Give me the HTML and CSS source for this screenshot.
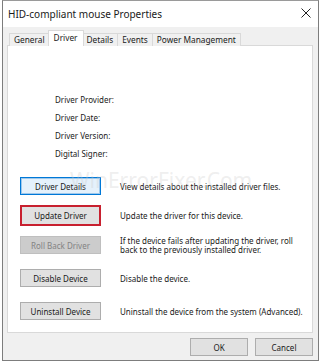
FILE: index.html
```html
<!DOCTYPE html>
<html lang="en">
<head>
  <meta charset="UTF-8" />
  <title>HID-compliant mouse Properties</title>
  <link rel="stylesheet" href="styles.css">
</head>
<body>

  <div class="window">
    <div class="titlebar">
      <span class="title">HID-compliant mouse Properties</span>
      <svg class="close" width="10" height="10" viewBox="0 0 10 10">
        <path d="M0.5 0.5 L9.5 9.5 M9.5 0.5 L0.5 9.5" stroke="#222" stroke-width="1" fill="none"/>
      </svg>
    </div>

    <div class="body">
      <div class="tabs">
        <div class="tab">General</div>
        <div class="tab active">Driver</div>
        <div class="tab">Details</div>
        <div class="tab">Events</div>
        <div class="tab">Power Management</div>
      </div>

      <div class="panel">
        <div class="info">
          <div>Driver Provider:</div>
          <div>Driver Date:</div>
          <div>Driver Version:</div>
          <div>Digital Signer:</div>
        </div>

        <div class="actions">
          <div class="row">
            <button class="btn focused">Driver Details</button>
            <p>View details about the installed driver files.</p>
          </div>
          <div class="row">
            <button class="btn marked">Update Driver</button>
            <p>Update the driver for this device.</p>
          </div>
          <div class="row">
            <button class="btn" disabled>Roll Back Driver</button>
            <p>If the device fails after updating the driver, roll back to the previously installed driver.</p>
          </div>
          <div class="row spaced">
            <button class="btn">Disable Device</button>
            <p>Disable the device.</p>
          </div>
          <div class="row spaced">
            <button class="btn">Uninstall Device</button>
            <p>Uninstall the device from the system (Advanced).</p>
          </div>
        </div>

        <div class="watermark">WinErrorFixer.Com</div>
      </div>

      <div class="footer">
        <button class="btn wide">OK</button>
        <button class="btn wide">Cancel</button>
      </div>
    </div>
  </div>

</body>
</html>
```

FILE: styles.css
```css
body {
  margin: 0;
  background: #fff;
  font-family: 'Noto Sans', sans-serif;
  font-size: 8px;
  color: #1a1a1a;
}

.window {
  width: 315px;
  height: 359px;
  margin-left: 2px;
  border: 1px solid #7d7d7d;
  border-top-color: #9a9a9a;
  background: #f0f0f0;
  display: flex;
  flex-direction: column;
}

.titlebar {
  height: 25px;
  background: #fff;
  display: flex;
  align-items: center;
  justify-content: space-between;
  padding: 0 7px 1px 5px;
}

.title {
  font-size: 10px;
}

.close {
  margin-top: -1px;
}

.body {
  flex: 1;
  padding: 6px 5px 0 4px;
  display: flex;
  flex-direction: column;
}

.tabs {
  display: flex;
  align-items: flex-end;
  padding-left: 2px;
  height: 13px;
  position: relative;
  z-index: 1;
  font-size: 8.3px;
}

.tab {
  height: 12px;
  padding: 0 4px;
  border: 1px solid #d9d9d9;
  border-bottom: none;
  margin-right: -1px;
  line-height: 12px;
  background: #f0f0f0;
}

.tab.active {
  height: 15px;
  background: #fff;
  margin-left: -1px;
  margin-right: -2px;
  padding: 0 5px;
  line-height: 13px;
  position: relative;
  z-index: 2;
}

.panel {
  position: relative;
  height: 286px;
  background: #fff;
  border: 1px solid #d9d9d9;
  margin-top: -1px;
}

.info {
  padding: 48px 0 0 47px;
  display: flex;
  flex-direction: column;
  gap: 7px;
  line-height: 11px;
}

.actions {
  margin-top: 18px;
  padding-left: 12px;
  display: flex;
  flex-direction: column;
  gap: 11px;
}

.row {
  display: flex;
  align-items: center;
  gap: 19px;
}

.row.spaced {
  margin-top: 4px;
}

.row p {
  margin: 0;
  width: 186px;
  line-height: 9px;
}

.btn {
  width: 81px;
  height: 18px;
  padding: 0;
  font-family: inherit;
  font-size: 8px;
  color: #1a1a1a;
  background: #e1e1e1;
  border: 1px solid #adadad;
  flex-shrink: 0;
}

.btn.focused {
  background: #e5f1fb;
  border-color: #0078d7;
  box-shadow: inset 0 0 0 1px #9ec8ec;
}

.btn.marked {
  border: 2px solid #c8202f;
  height: 21px;
  margin: -1px 0;
}

.btn:disabled {
  background: #cccccc;
  border-color: #bfbfbf;
  color: #838383;
}

.watermark {
  position: absolute;
  left: 62px;
  top: 120px;
  font-size: 21px;
  color: rgba(200, 200, 200, 0.3);
  pointer-events: none;
}

.footer {
  display: flex;
  justify-content: flex-end;
  gap: 7px;
  padding: 5px 0 0;
}

.btn.wide {
  width: 58px;
}
```
